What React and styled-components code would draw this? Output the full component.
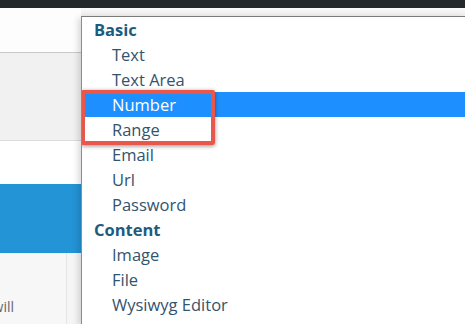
import styled, { createGlobalStyle } from 'styled-components';

const GlobalStyle = createGlobalStyle`
  html, body {
    margin: 0;
    padding: 0;
    background: #fff;
    overflow: hidden;
  }
  body {
    font-family: "Open Sans", "Noto Sans", sans-serif;
  }
`

const Page = styled.div`
  width: 465px;
  height: 324px;
  display: flex;
  flex-direction: column;
  overflow: hidden;
`
const TopBar = styled.div`
  height: 8px;
  background: #23282d;
  flex-shrink: 0;
`
const Main = styled.div`
  flex: 1;
  display: flex;
  min-height: 0;
`
const LeftPane = styled.div`
  width: 81px;
  flex-shrink: 0;
  display: flex;
  flex-direction: column;
`
const Section = styled.div`
  height: ${p => p.h}px;
  background: ${p => p.bg};
  border-bottom: ${p => p.line ? `1px solid ${p.line}` : 'none'};
  flex-shrink: 0;
`
const Footer = styled.div`
  flex: 1;
  display: flex;
  background: #f5f5f5;
`
const FooterCell = styled.div`
  width: 67px;
  border-right: 1px solid #e6e6e6;
  background: #f7f7f7;
  display: flex;
  align-items: flex-end;
  justify-content: flex-end;
  overflow: hidden;
  padding-bottom: 8px;
  box-sizing: border-box;
`
const FooterText = styled.span`
  font-size: 14px;
  color: #666;
  margin-right: 52px;
  white-space: nowrap;
`
const RightPane = styled.div`
  flex: 1;
  display: flex;
  flex-direction: column;
  min-width: 0;
`
const Strip = styled.div`
  height: 8px;
  background: linear-gradient(#fafafa, #ececec);
  flex-shrink: 0;
`
const List = styled.ul`
  flex: 1;
  margin: 0;
  padding: 0;
  list-style: none;
  background: #fff;
  border-top: 1px solid #7a7a7a;
  border-left: 1px solid #8c8c8c;
  box-shadow: -3px 2px 6px rgba(0, 0, 0, 0.14);
  overflow: hidden;
`
const GroupLabel = styled.li`
  height: 25px;
  line-height: 25px;
  padding-left: 12px;
  font-size: 16.5px;
  font-weight: 700;
  color: #1b5c7f;
`
const Option = styled.li`
  height: 25px;
  line-height: 25px;
  padding-left: 30px;
  font-size: 16.5px;
  color: ${p => p.selected ? '#fff' : '#32546e'};
  background: ${p => p.selected ? '#1e8fff' : 'transparent'};
  white-space: nowrap;
`
const Marked = styled.div`
  position: relative;

  &::after {
    content: '';
    position: absolute;
    left: -1px;
    top: -2px;
    bottom: -3px;
    width: 134px;
    box-sizing: border-box;
    border: 4px solid #e9564a;
    border-radius: 2px;
    box-shadow: 0 1px 4px rgba(0, 0, 0, 0.45);
    pointer-events: none;
  }
`

const groups = [
  { label: 'Basic', items: ['Text', 'Text Area', ['Number', 'Range'], 'Email', 'Url', 'Password'] },
  { label: 'Content', items: ['Image', 'File', 'Wysiwyg Editor', 'oEmbed'] },
]

function App() {
  return (
    <Page>
      <GlobalStyle />
      <TopBar />
      <Main>
        <LeftPane>
          <Section h={44} bg="#fdfdfd" line="#c9c9c9" />
          <Section h={87} bg="#f1f1f1" line="#dcdcdc" />
          <Section h={43} bg="#fff" />
          <Section h={69} bg="#2394d6" />
          <Footer>
            <FooterCell>
              <FooterText>will</FooterText>
            </FooterCell>
          </Footer>
        </LeftPane>
        <RightPane>
          <Strip />
          <List>
            {groups.map(g => (
              <div key={g.label}>
                <GroupLabel>{g.label}</GroupLabel>
                {g.items.map(item => Array.isArray(item) ? (
                  <Marked key={item[0]}>
                    <Option selected>{item[0]}</Option>
                    <Option>{item[1]}</Option>
                  </Marked>
                ) : (
                  <Option key={item}>{item}</Option>
                ))}
              </div>
            ))}
          </List>
        </RightPane>
      </Main>
    </Page>
  );
}

export default App;
